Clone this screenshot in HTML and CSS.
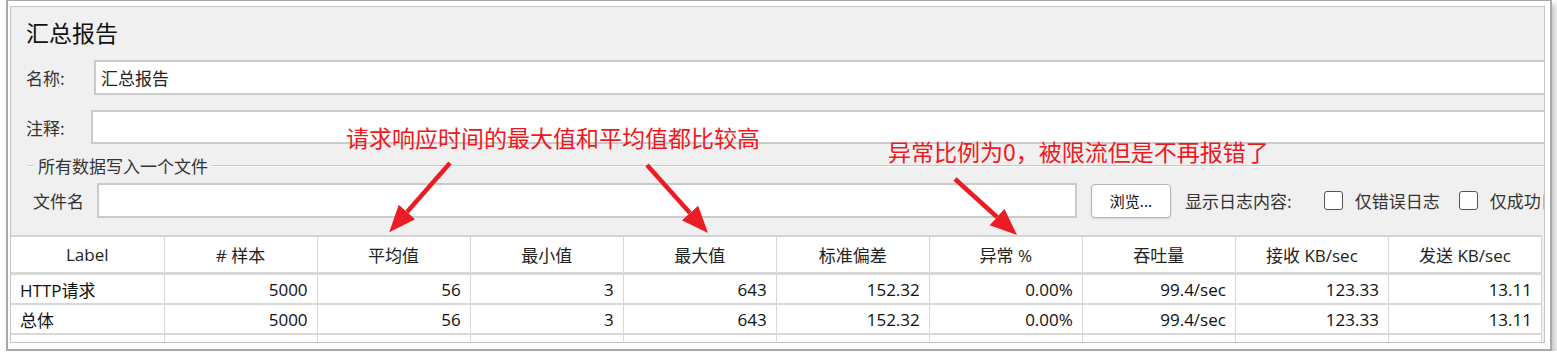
FILE: index.html
```html
<!DOCTYPE html>
<html lang="zh-CN">
<head>
    <meta charset="UTF-8">
    <title>汇总报告</title>
    <link rel="stylesheet" href="styles.css">
</head>
<body>
    <div class="frame">
        <div class="panel">
            <div class="panel-title">汇总报告</div>

            <div class="form-row name-row">
                <label class="name-label">名称:</label>
                <input class="field" type="text" value="汇总报告">
            </div>

            <div class="form-row comment-row">
                <label class="comment-label">注释:</label>
                <div class="field area"></div>
            </div>

            <div class="group-title"><span>所有数据写入一个文件</span></div>

            <div class="file-row">
                <label class="file-label">文件名</label>
                <div class="field file-field"></div>
                <button class="browse">浏览...</button>
                <span class="log-label">显示日志内容:</span>
                <span class="check"></span>
                <span class="check-text">仅错误日志</span>
                <span class="check check-two"></span>
                <span class="check-text">仅成功日志</span>
            </div>

            <table class="report">
                <colgroup>
                    <col><col><col><col><col><col><col><col><col><col>
                </colgroup>
                <thead>
                    <tr>
                        <th>Label</th>
                        <th># 样本</th>
                        <th>平均值</th>
                        <th>最小值</th>
                        <th>最大值</th>
                        <th>标准偏差</th>
                        <th>异常 %</th>
                        <th>吞吐量</th>
                        <th>接收 KB/sec</th>
                        <th>发送 KB/sec</th>
                    </tr>
                </thead>
                <tbody>
                    <tr>
                        <td class="name">HTTP请求</td>
                        <td>5000</td>
                        <td>56</td>
                        <td>3</td>
                        <td>643</td>
                        <td>152.32</td>
                        <td>0.00%</td>
                        <td>99.4/sec</td>
                        <td>123.33</td>
                        <td>13.11</td>
                    </tr>
                    <tr>
                        <td class="name">总体</td>
                        <td>5000</td>
                        <td>56</td>
                        <td>3</td>
                        <td>643</td>
                        <td>152.32</td>
                        <td>0.00%</td>
                        <td>99.4/sec</td>
                        <td>123.33</td>
                        <td>13.11</td>
                    </tr>
                    <tr class="empty">
                        <td></td><td></td><td></td><td></td><td></td>
                        <td></td><td></td><td></td><td></td><td></td>
                    </tr>
                </tbody>
            </table>
        </div>
    </div>

    <!-- annotations drawn over the screenshot -->
    <div class="note note-one">请求响应时间的最大值和平均值都比较高</div>
    <div class="note note-two">异常比例为0，被限流但是不再报错了</div>

    <svg class="arrows" width="1557" height="359" viewBox="0 0 1557 359">
        <defs>
            <marker id="head" markerUnits="userSpaceOnUse" markerWidth="28" markerHeight="24"
                    refX="0" refY="12" orient="auto">
                <path d="M0,1 L27,12 L0,23 z" fill="#ec1c24"/>
            </marker>
        </defs>
        <line x1="450" y1="163" x2="407" y2="212" marker-end="url(#head)"/>
        <line x1="647" y1="165" x2="690" y2="213" marker-end="url(#head)"/>
        <line x1="955" y1="179" x2="997" y2="217" marker-end="url(#head)"/>
    </svg>
</body>
</html>
```

FILE: styles.css
```css
body {
    margin: 0;
    background: #fff;
    font-family: "Open Sans", "Noto Sans CJK SC", sans-serif;
    color: #000;
}
.frame {
    box-sizing: border-box;
    width: 1546px;
    height: 351px;
    margin-left: 6px;
    padding: 5px 5px 5px 2px;
    border: 2px solid #a8a8a8;
    border-top-width: 1px;
    background: #fff;
    box-shadow: 4px 4px 6px rgba(0, 0, 0, 0.22);
}
.panel {
    box-sizing: border-box;
    height: 337px;
    border: 1px solid #c4c4c4;
    background: #f0f0f0;
    overflow: hidden;
    display: flex;
    flex-direction: column;
}
.panel-title {
    margin-top: 10px;
    padding-left: 15px;
    font-family: "Noto Sans CJK SC", sans-serif;
    font-size: 23px;
    line-height: 30px;
    color: #111;
}
.form-row {
    display: flex;
    align-items: center;
    padding-left: 15px;
    font-family: "Noto Sans CJK SC", sans-serif;
    font-size: 17px;
    color: #333;
}
.name-row {
    margin-top: 13px;
}
.comment-row {
    margin-top: 15px;
}
.name-label {
    flex: none;
    width: 68px;
}
.comment-label {
    flex: none;
    width: 65px;
}
.field {
    box-sizing: border-box;
    flex: 1;
    height: 35px;
    margin-right: -20px;
    padding: 0 5px;
    border: 2px solid #cacaca;
    background: #fff;
    font-family: "Noto Sans CJK SC", sans-serif;
    font-size: 17px;
    color: #222;
    outline: none;
}
.area {
    height: 34px;
}
.group-title {
    display: flex;
    align-items: center;
    margin: 11px 0 0 17px;
    font-family: "Noto Sans CJK SC", sans-serif;
    font-size: 17px;
    line-height: 22px;
    color: #333;
}
.group-title::before,
.group-title::after {
    content: "";
    height: 1px;
    border-bottom: 1px solid #fff;
    background: #c8c8c8;
}
.group-title::before {
    width: 6px;
}
.group-title::after {
    flex: 1;
}
.group-title span {
    padding: 0 3px 0 4px;
}
.file-row {
    display: flex;
    align-items: center;
    margin-top: 6px;
    padding-left: 22px;
    height: 35px;
    white-space: nowrap;
    font-family: "Noto Sans CJK SC", sans-serif;
    font-size: 17px;
    color: #333;
}
.file-row > * {
    flex: none;
}
.file-label {
    width: 64px;
}
.file-field {
    width: 980px;
    margin-right: 0;
}
.browse {
    box-sizing: border-box;
    width: 80px;
    height: 34px;
    margin-left: 14px;
    border: 1px solid #b4b4b4;
    border-radius: 4px;
    background: #fff;
    box-shadow: 0 1px 2px rgba(0, 0, 0, 0.12);
    font-family: "Noto Sans CJK SC", sans-serif;
    font-size: 15px;
    color: #111;
}
.log-label {
    margin-left: 14px;
}
.check {
    box-sizing: border-box;
    width: 19px;
    height: 19px;
    margin-left: 32px;
    border: 1px solid #555;
    border-radius: 3px;
    background: #fff;
}
.check-two {
    margin-left: 19px;
}
.check-text {
    margin-left: 12px;
}
.report {
    margin-top: 17px;
    width: 1531px;
    table-layout: fixed;
    border-collapse: collapse;
    background: #fff;
    font-size: 17px;
    border-top: 2px solid #d4d4d4;
}
.report col {
    width: 153px;
}
.report th {
    height: 35px;
    padding: 0;
    font-weight: normal;
    color: #222;
    border-right: 1px solid #d8d8d8;
    border-bottom: 3px solid #d8d8d8;
}
.report td {
    height: 28px;
    padding: 0 9px 0 0;
    text-align: right;
    color: #111;
    border-right: 1px solid #d8d8d8;
    border-bottom: 2px solid #d8d8d8;
}
.report td.name {
    padding-left: 9px;
    text-align: left;
}
.report .empty td {
    height: 24px;
}
.note {
    position: absolute;
    font-family: "Noto Sans CJK SC", sans-serif;
    font-size: 23px;
    line-height: 30px;
    color: #f01820;
    white-space: nowrap;
}
.note-one {
    left: 346px;
    top: 122px;
}
.note-two {
    left: 888px;
    top: 136px;
}
.arrows {
    position: absolute;
    left: 0;
    top: 0;
    pointer-events: none;
}
.arrows line {
    stroke: #ec1c24;
    stroke-width: 4.5;
}
```
